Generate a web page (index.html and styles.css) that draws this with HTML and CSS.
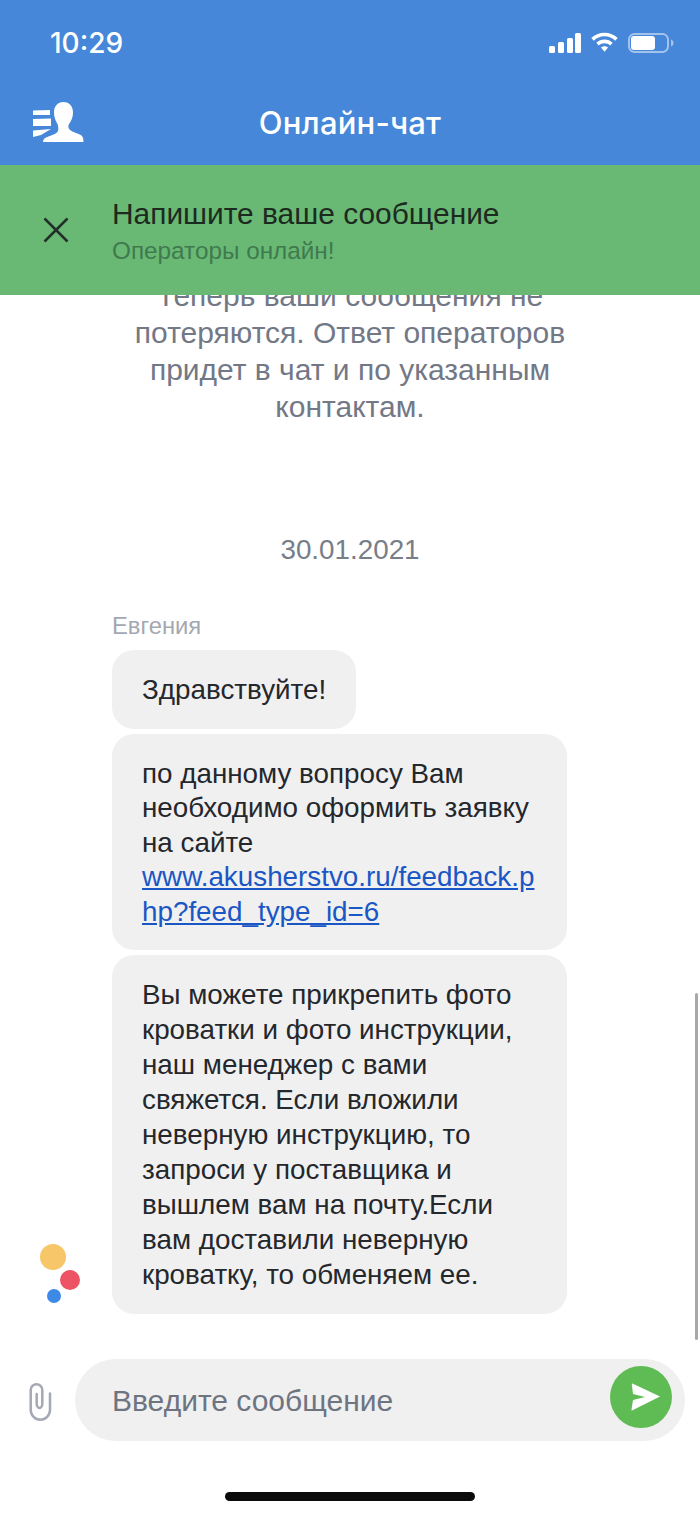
FILE: index.html
```html
<!DOCTYPE html>
<html lang="ru">
<head>
<meta charset="utf-8">
<title>Онлайн-чат</title>
<link rel="stylesheet" href="styles.css">
</head>
<body>
<div class="app">
  <header class="header">
    <div class="status">
      <span class="time">10:29</span>
      <div class="status-icons">
        <svg class="signal" width="32" height="20" viewBox="0 0 32 20"><rect x="0" y="13" width="6" height="7" rx="1.500"/><rect x="9" y="9" width="6" height="11" rx="1.500"/><rect x="18" y="5" width="6" height="15" rx="1.500"/><rect x="26" y="0" width="6" height="20" rx="1.500"/></svg>
        <svg class="wifi" width="27" height="21" viewBox="0 0 29 21"><path d="M14.500 0C20 0 25 2.200 28.700 5.700L26 8.500C23 5.600 19 3.900 14.500 3.900S6 5.600 3 8.500L.3 5.700C4 2.200 9 0 14.500 0Z"/><path d="M14.500 7.300C17.900 7.300 21 8.600 23.300 10.800L20.600 13.600C19 12.100 16.900 11.200 14.500 11.200S10 12.100 8.400 13.600L5.700 10.800C8 8.600 11.100 7.300 14.500 7.300Z"/><path d="M14.500 14.500C16 14.500 17.300 15.100 18.300 16L14.500 20.500L10.700 16C11.700 15.100 13 14.500 14.500 14.500Z"/></svg>
        <svg class="battery" width="46" height="20" viewBox="0 0 46 20"><rect x="1" y="1" width="39" height="18" rx="5.500" class="battery-case"/><rect x="3" y="3" width="24" height="14" rx="3" class="battery-level"/><path d="M43 6.500C44.500 7 45.500 8.300 45.500 10S44.500 13 43 13.500Z" class="battery-cap"/></svg>
      </div>
    </div>
    <div class="nav">
      <svg class="nav-icon" width="51" height="41" viewBox="0 0 51 41"><path d="M30.500 0C36.500 0 40 4.500 40 10.500C40 15 38.500 19 36 22C35 24 35 26 37 28C40 30.500 46 31.500 48.500 33.500C50 34.800 50.500 37 50.500 40H10C10 38 11 36.500 13 35.500C17 33.500 22 32.500 24.500 30C25.800 28 25.500 25 24.500 22C22.500 19 21 15 21 10.500C21 4.500 24.500 0 30.500 0Z"/><path d="M0 8.500L17 8V13H0Z"/><path d="M0 17L18 16.500V24H0Z"/><path d="M0 28.500L18 27L8 33L0 35Z"/></svg>
      <h1 class="title">Онлайн-чат</h1>
    </div>
  </header>
  <section class="banner">
    <svg class="close" width="26" height="26" viewBox="0 0 26 26"><path d="M1.500 1.500L24.500 24.500M24.500 1.500L1.500 24.500"/></svg>
    <div class="banner-text">
      <div class="banner-title">Напишите ваше сообщение</div>
      <div class="banner-sub">Операторы онлайн!</div>
    </div>
  </section>
  <main class="chat">
    <p class="notice">Теперь ваши сообщения не потеряются. Ответ операторов придет в чат и по указанным контактам.</p>
    <div class="date">30.01.2021</div>
    <div class="thread">
      <svg class="avatar" width="44" height="60" viewBox="0 0 44 60"><circle cx="13" cy="13" r="13" fill="#f6c668"/><circle cx="30" cy="36" r="10" fill="#ec5463"/><circle cx="14" cy="52" r="7" fill="#3d8ae6"/></svg>
      <div class="messages">
        <div class="author">Евгения</div>
        <div class="bubble">Здравствуйте!</div>
        <div class="bubble bubble-link">по данному вопросу Вам необходимо оформить заявку на сайте <a class="link" href="#">www.akusherstvo.ru/feedback.php?feed_type_id=6</a></div>
        <div class="bubble">Вы можете прикрепить фото кроватки и фото инструкции, наш менеджер с вами свяжется. Если вложили неверную инструкцию, то запроси у поставщика и вышлем вам на почту.Если вам доставили неверную кроватку, то обменяем ее.</div>
      </div>
    </div>
    <div class="scrollbar"></div>
  </main>
  <footer class="composer">
    <svg class="clip" width="26" height="40" viewBox="14 12 26 40"><path d="M35 23.500V40A9.650 9.650 0 0 1 15.700 40V20A5.800 5.800 0 0 1 27.300 20V33.500A2.800 4.500 0 0 1 21.700 33.500V24"/></svg>
    <div class="input">
      <span class="placeholder">Введите сообщение</span>
      <span class="send">
        <svg width="30" height="28" viewBox="0 0 30 28"><path d="M1.500 0.500L29 13.500L1 27.500C0.500 27.500 0.500 27 0.500 26.500L2 17L14 14L2 11L0.800 1.500C0.800 0.800 1 0.500 1.500 0.500Z"/></svg>
      </span>
    </div>
  </footer>
  <div class="home-bar"><span class="home-indicator"></span></div>
</div>
</body>
</html>
```

FILE: styles.css
```css
* { box-sizing: border-box; }
html, body { margin: 0; padding: 0; background: #fff; }
body { font-family: "Liberation Sans", Arial, sans-serif; color: #24272c; }
.app { position: relative; width: 700px; height: 1516px; display: flex; flex-direction: column; overflow: hidden; background: #fff; }

.header { flex: none; height: 165px; background: #4687d9; color: #fff; position: relative; z-index: 2; }
.status { height: 84px; display: flex; justify-content: space-between; align-items: flex-start; padding: 27px 26px 0 50px; }
.time { font-family: Inter, sans-serif; font-size: 28px; line-height: 33px; font-weight: 500; }
.status-icons { display: flex; align-items: center; gap: 10px; padding-top: 5px; }
.status-icons svg { display: block; fill: #fff; }
.status-icons .battery-case { fill: none; stroke: #a3c3ec; stroke-width: 2; }
.status-icons .battery-cap { fill: #a3c3ec; }
.nav { position: relative; display: flex; justify-content: center; height: 81px; padding-top: 20px; }
.nav-icon { position: absolute; left: 33px; top: 18px; fill: #fff; }
.title { margin: 0; font-family: Inter, sans-serif; font-size: 31px; line-height: 38px; font-weight: 500; letter-spacing: 0.2px; }

.banner { flex: none; height: 130px; background: #69b975; display: flex; align-items: flex-start; position: relative; z-index: 2; }
.close { margin: 52px 0 0 43px; fill: none; stroke: #23302a; stroke-width: 2.500; flex: none; }
.banner-text { margin: 30px 0 0 43px; }
.banner-title { font-size: 29.900px; line-height: 38px; color: #1c2a20; }
.banner-sub { font-size: 24.300px; line-height: 30px; margin-top: 3px; color: #3f7a4e; }

.chat { flex: 1; min-height: 0; position: relative; display: flex; flex-direction: column; justify-content: flex-end; overflow: hidden; padding-bottom: 45px; }
.notice { margin: 0; align-self: center; width: 470px; flex: none; text-align: center; font-size: 30px; line-height: 37px; color: #737886; }
.date { flex: none; margin-top: 108px; text-align: center; font-size: 27.800px; line-height: 34px; color: #787e89; }
.thread { flex: none; display: flex; align-items: flex-end; margin-top: 46px; }
.avatar { flex: none; display: block; margin: 0 28px 10px 40px; }
.messages { width: 455px; display: flex; flex-direction: column; align-items: flex-start; gap: 5px; }
.author { font-size: 23.800px; line-height: 26px; color: #a3a8b1; margin-bottom: 6px; }
.bubble { background: #f0f0f1; border-radius: 22px; padding: 22px 30px; font-size: 27.800px; line-height: 35px; color: #24272c; }
.bubble-link { line-height: 34.600px; padding-top: 22.500px; padding-bottom: 20.500px; }
.link { display: block; color: #1a56c4; text-decoration: underline; word-break: break-all; }
.scrollbar { position: absolute; right: 2px; bottom: 19px; width: 3px; height: 347px; border-radius: 2px; background: #a8a8a8; }

.composer { flex: none; display: flex; align-items: center; height: 82px; padding: 0 15px 0 29px; }
.clip { flex: none; fill: none; stroke: #a5a8b5; stroke-width: 2.500; stroke-linecap: round; stroke-linejoin: round; margin-top: 4px; }
.input { margin-left: 20px; flex: 1; height: 82px; border-radius: 41px; background: #f0f0f1; display: flex; align-items: center; justify-content: space-between; padding: 0 13px 6px 37px; }
.placeholder { font-size: 30px; line-height: 36px; color: #6e7480; padding-top: 8px; }
.send { width: 62px; height: 62px; border-radius: 50%; background: #5fbb54; display: flex; align-items: center; justify-content: center; padding-left: 10px; }
.send svg { display: block; fill: #fff; }

.home-bar { flex: none; height: 75px; display: flex; justify-content: center; padding-top: 51px; }
.home-indicator { display: block; width: 250px; height: 9px; border-radius: 5px; background: #0b0b0b; }
```
